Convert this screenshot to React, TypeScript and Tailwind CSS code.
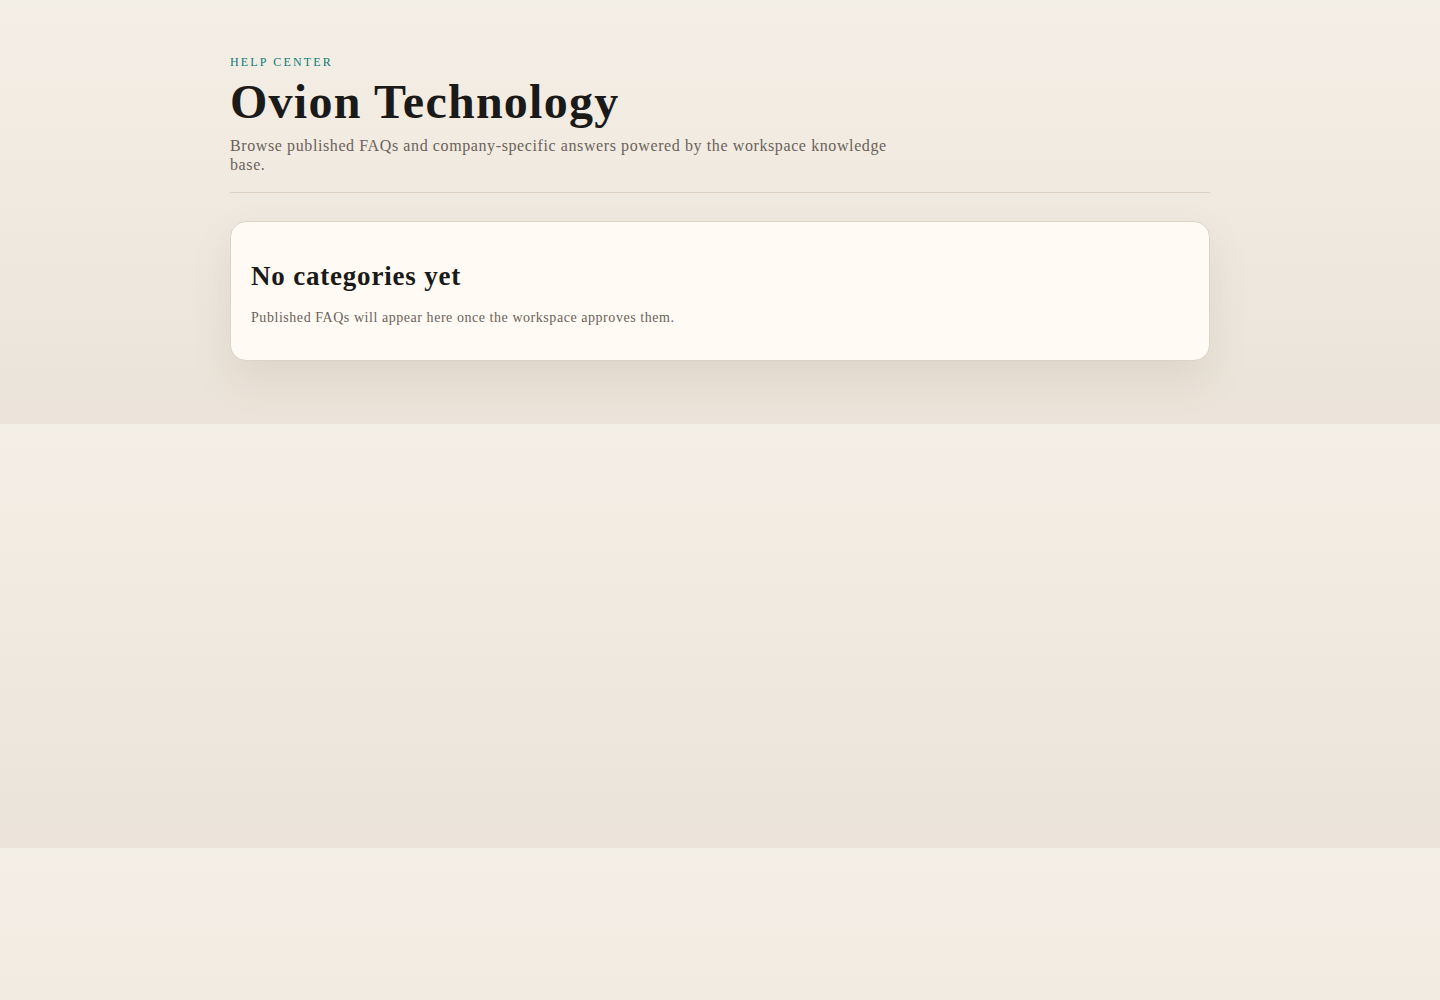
export default function App() {
  return (
    <div className="min-h-screen bg-[linear-gradient(180deg,#f4efe6_0%,#ebe3d9_100%)] bg-[length:100%_424px] bg-repeat-y font-['Liberation_Serif','DejaVu_Serif',serif] text-[#1c1a17]">
      <main className="mx-auto w-[980px] pt-[53px] pb-[64px]">
        <header className="border-b border-[#dcd1c2] pb-[18px]">
          <p className="text-[12px] uppercase tracking-[0.18em] text-[#0f7a70]">Help Center</p>
          <h1 className="mt-[5px] text-[48px] font-bold leading-[1.1] tracking-[1.25px]">Ovion Technology</h1>
          <p className="mt-[7px] max-w-[664px] text-[16px] leading-[19px] tracking-[0.6px] text-[#6b625a]">
            Browse published FAQs and company-specific answers powered by the workspace knowledge base.
          </p>
        </header>

        <section className="mt-[28px] rounded-[16px] border border-[#ddd3c5] bg-[#fffaf3] px-[20px] pt-[38px] pb-[32px] shadow-[0_18px_40px_rgba(120,100,70,0.12)]">
          <h2 className="text-[27px] font-bold leading-[1.2] tracking-[0.8px]">No categories yet</h2>
          <p className="mt-[15px] text-[14px] tracking-[0.55px] text-[#6b625a]">
            Published FAQs will appear here once the workspace approves them.
          </p>
        </section>
      </main>
    </div>
  )
}
